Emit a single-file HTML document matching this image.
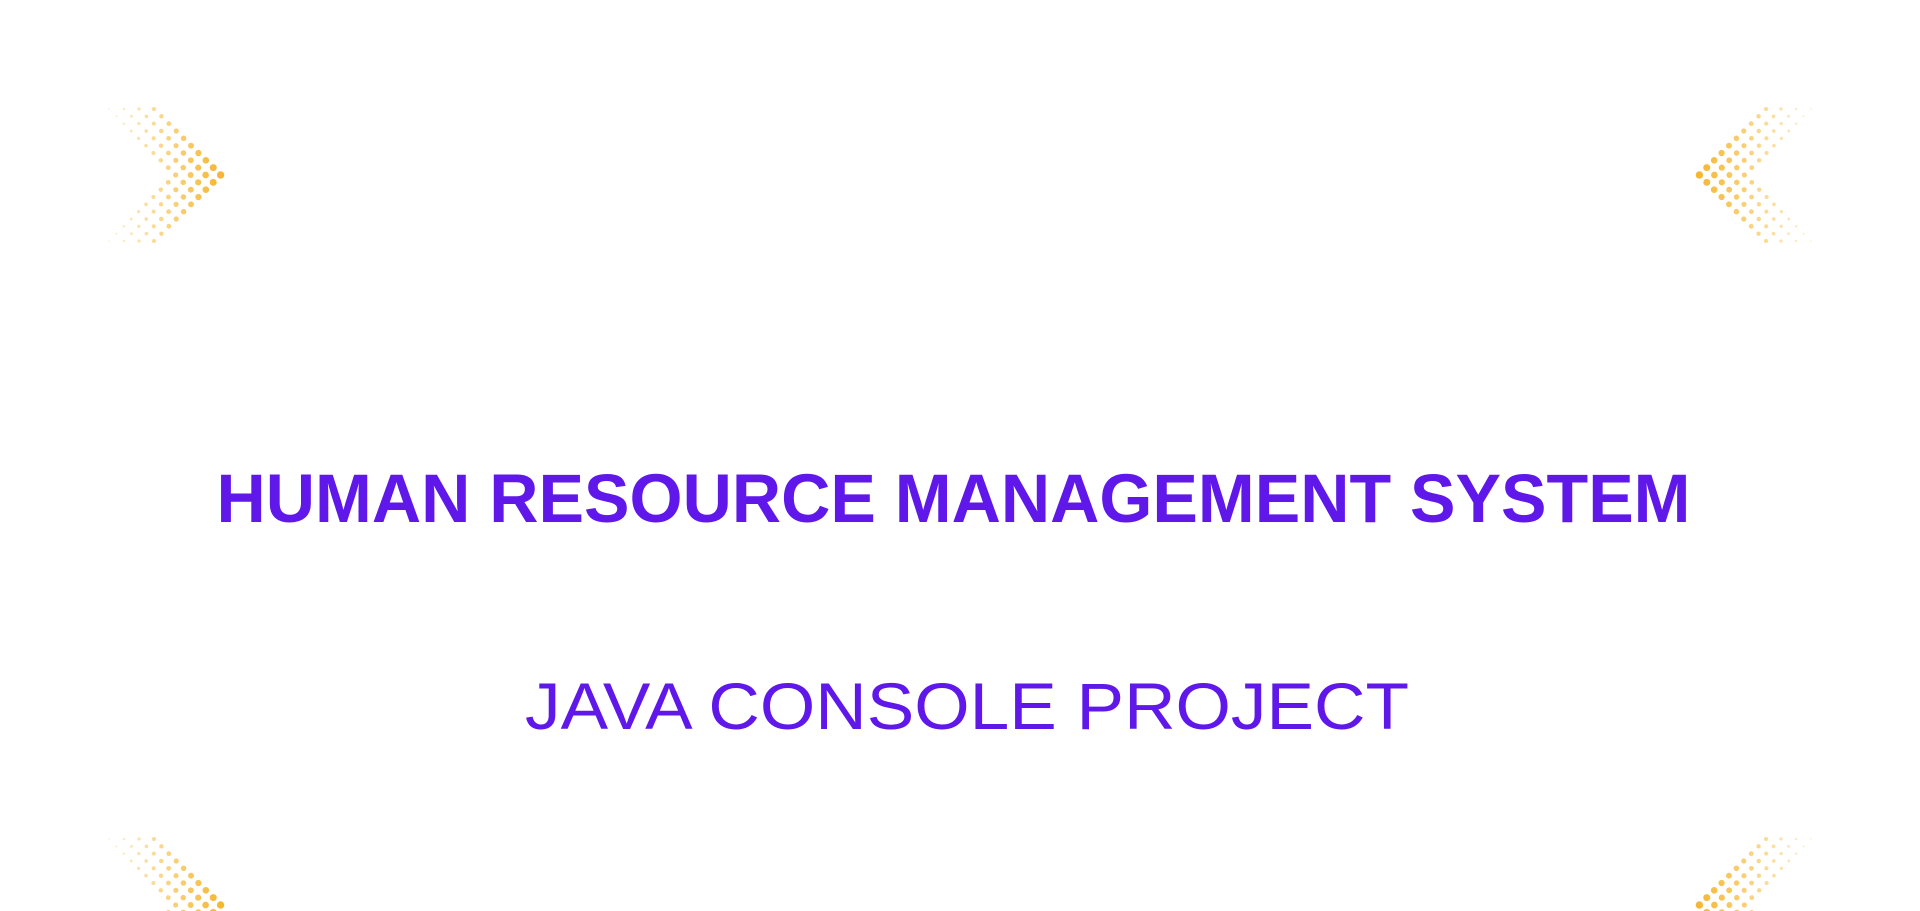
<!DOCTYPE html>
<html><head><meta charset="utf-8"><style>html,body{margin:0;padding:0;background:#fff;overflow:hidden;width:1920px;height:911px}svg{display:block}</style></head>
<body>
<svg width="1920" height="911" viewBox="0 0 1920 911" xmlns="http://www.w3.org/2000/svg">
<defs>
<linearGradient id="g" gradientUnits="userSpaceOnUse" x1="0" y1="0" x2="113" y2="0">
<stop offset="0" stop-color="#f5b731" stop-opacity="0.18"/>
<stop offset="1" stop-color="#f5b731" stop-opacity="1"/>
</linearGradient>
<g id="r0"><circle cx="0" cy="0" r=".9"/><circle cx="15" cy="0" r="1.28"/><circle cx="30" cy="0" r="1.65"/><circle cx="45" cy="0" r="2.03"/></g>
<g id="r1"><circle cx="7.4" cy="0" r="1.09"/><circle cx="22.4" cy="0" r="1.46"/><circle cx="37.4" cy="0" r="1.84"/><circle cx="52.4" cy="0" r="2.21"/></g>
<g id="r2"><circle cx="14.8" cy="0" r="1.27"/><circle cx="29.8" cy="0" r="1.65"/><circle cx="44.8" cy="0" r="2.02"/><circle cx="59.8" cy="0" r="2.4"/></g>
<g id="r3"><circle cx="22.2" cy="0" r="1.46"/><circle cx="37.2" cy="0" r="1.83"/><circle cx="52.2" cy="0" r="2.21"/><circle cx="67.2" cy="0" r="2.58"/></g>
<g id="r4"><circle cx="29.6" cy="0" r="1.64"/><circle cx="44.6" cy="0" r="2.02"/><circle cx="59.6" cy="0" r="2.39"/><circle cx="74.6" cy="0" r="2.77"/></g>
<g id="r5"><circle cx="37" cy="0" r="1.83"/><circle cx="52" cy="0" r="2.2"/><circle cx="67" cy="0" r="2.58"/><circle cx="82" cy="0" r="2.95"/></g>
<g id="r6"><circle cx="44.4" cy="0" r="2.01"/><circle cx="59.4" cy="0" r="2.39"/><circle cx="74.4" cy="0" r="2.76"/><circle cx="89.4" cy="0" r="3.14"/></g>
<g id="r7"><circle cx="51.8" cy="0" r="2.2"/><circle cx="66.8" cy="0" r="2.57"/><circle cx="81.8" cy="0" r="2.95"/><circle cx="96.8" cy="0" r="3.32"/></g>
<g id="r8"><circle cx="59.2" cy="0" r="2.38"/><circle cx="74.2" cy="0" r="2.76"/><circle cx="89.2" cy="0" r="3.13"/><circle cx="104.2" cy="0" r="3.51"/></g>
<g id="r9"><circle cx="66.6" cy="0" r="2.57"/><circle cx="81.6" cy="0" r="2.94"/><circle cx="96.6" cy="0" r="3.32"/><circle cx="111.6" cy="0" r="3.69"/></g>
<g id="chev" fill="url(#g)">
<use href="#r0" y="0"/><use href="#r1" y="7.33"/><use href="#r2" y="14.66"/><use href="#r3" y="22"/><use href="#r4" y="29.33"/>
<use href="#r5" y="36.66"/><use href="#r6" y="44"/><use href="#r7" y="51.33"/><use href="#r8" y="58.66"/><use href="#r9" y="66"/>
<use href="#r8" y="73.33"/><use href="#r7" y="80.66"/><use href="#r6" y="88"/><use href="#r5" y="95.33"/><use href="#r4" y="102.66"/>
<use href="#r3" y="110"/><use href="#r2" y="117.33"/><use href="#r1" y="124.66"/><use href="#r0" y="132"/>
</g>
</defs>
<use href="#chev" transform="translate(109,109)"/>
<use href="#chev" transform="translate(1811,109) scale(-1,1)"/>
<use href="#chev" transform="translate(109,839)"/>
<use href="#chev" transform="translate(1811,839) scale(-1,1)"/>
<text x="953.5" y="522" text-anchor="middle" font-family="Liberation Sans, Arial, sans-serif" font-weight="bold" font-size="69" fill="#5f17ea" textLength="1474" lengthAdjust="spacingAndGlyphs">HUMAN RESOURCE MANAGEMENT SYSTEM</text>
<text x="967" y="729" text-anchor="middle" font-family="Liberation Sans, Arial, sans-serif" font-size="66" fill="#5f17ea" textLength="884" lengthAdjust="spacingAndGlyphs">JAVA CONSOLE PROJECT</text>
</svg>
</body></html>
